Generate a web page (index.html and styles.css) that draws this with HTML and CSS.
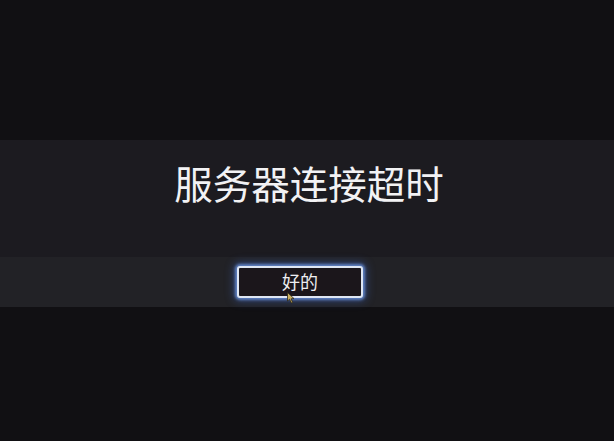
FILE: index.html
```html
<!DOCTYPE html>
<html lang="zh">
<head>
<meta charset="utf-8">
<link rel="stylesheet" href="styles.css">
</head>
<body>
<div class="screen">
  <div class="spacer-top"></div>
  <div class="dialog">
    <div class="message">服务器连接超时</div>
  </div>
  <div class="actions">
    <div class="btn-wrap">
      <button class="btn">好的</button>
      <svg class="cursor" width="8" height="12" viewBox="0 0 8 12"><path d="M0.5 0.5 L0.5 9 L2.6 7.2 L4.2 11 L5.6 10.4 L4.1 6.8 L7 6.6 Z" fill="#c9b060" stroke="#2a2418" stroke-width="0.8"/></svg>
    </div>
  </div>
</div>
</body>
</html>
```
FILE: styles.css
```css
html, body {
  margin: 0;
  padding: 0;
  background: #111013;
  width: 614px;
  height: 441px;
  overflow: hidden;
}
.screen {
  display: flex;
  flex-direction: column;
  width: 614px;
  height: 441px;
  font-family: "Noto Sans CJK SC", "Noto Sans", sans-serif;
}
.spacer-top {
  height: 140px;
  flex: none;
}
.dialog {
  height: 117px;
  background: #1c1b20;
  display: flex;
  justify-content: center;
  align-items: flex-start;
  flex: none;
}
.message {
  color: #f2f2f4;
  font-size: 38.5px;
  line-height: 38px;
  margin-top: 23px;
  margin-left: 4px;
}
.actions {
  height: 50px;
  background: #222226;
  display: flex;
  justify-content: center;
  align-items: center;
  flex: none;
}
.btn-wrap {
  position: relative;
  margin-right: 14px;
}
.btn {
  display: block;
  width: 126px;
  height: 32px;
  box-sizing: border-box;
  border: 2px solid #dfe7f4;
  border-radius: 3px;
  background: #1b161b;
  color: #eeeef2;
  font-family: "Noto Sans CJK SC", "Noto Sans", sans-serif;
  font-size: 18px;
  line-height: 24px;
  padding: 0 0 2px 0;
  box-shadow: 0 0 3px 2px rgba(110, 150, 225, 0.8), 0 0 9px 4px rgba(60, 100, 190, 0.4);
}
.cursor {
  position: absolute;
  left: 50px;
  top: 26px;
}
```
